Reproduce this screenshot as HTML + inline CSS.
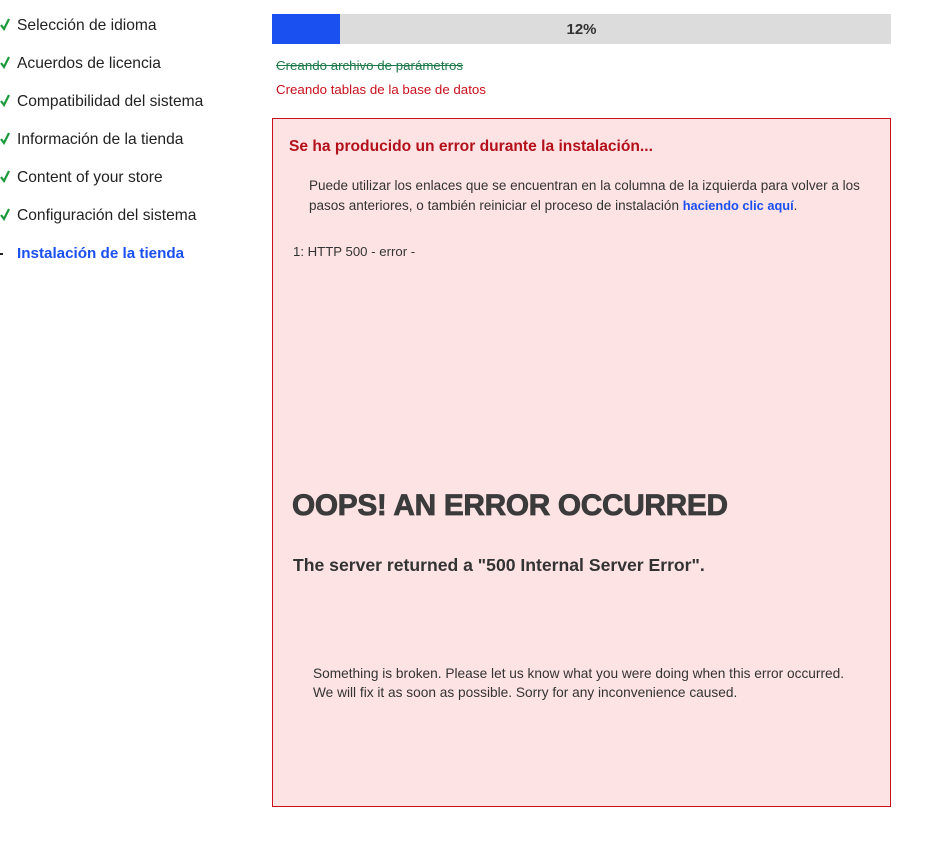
<!DOCTYPE html>
<html><head><meta charset="utf-8"><style>
body{margin:0;width:925px;height:848px;background:#fff;font-family:"Liberation Sans",sans-serif;position:relative;overflow:hidden;color:#222}
.a{position:absolute;white-space:nowrap}
.side{left:17px;font-size:15.6px;color:#222;line-height:20px}
.ck{position:absolute;left:0}
#bar{left:272px;top:14px;width:619px;height:30px;background:#dcdcdc}
#fill{position:absolute;left:0;top:0;width:68px;height:30px;background:#1a4ff0}
#pct{position:absolute;left:0;right:0;top:0;line-height:32px;text-align:center;font-weight:bold;font-size:15px;color:#333}
#box{left:272px;top:118px;width:617px;height:687px;background:#fde3e4;border:1px solid #c8101d}
</style></head><body>
<svg class="ck" style="top:17px" width="10" height="14" viewBox="0 0 10 14"><path d="M1 8 L4 12 L9 2" stroke="#1a9a3a" stroke-width="2.2" fill="none"/></svg>
<svg class="ck" style="top:55px" width="10" height="14" viewBox="0 0 10 14"><path d="M1 8 L4 12 L9 2" stroke="#1a9a3a" stroke-width="2.2" fill="none"/></svg>
<svg class="ck" style="top:93px" width="10" height="14" viewBox="0 0 10 14"><path d="M1 8 L4 12 L9 2" stroke="#1a9a3a" stroke-width="2.2" fill="none"/></svg>
<svg class="ck" style="top:131px" width="10" height="14" viewBox="0 0 10 14"><path d="M1 8 L4 12 L9 2" stroke="#1a9a3a" stroke-width="2.2" fill="none"/></svg>
<svg class="ck" style="top:169px" width="10" height="14" viewBox="0 0 10 14"><path d="M1 8 L4 12 L9 2" stroke="#1a9a3a" stroke-width="2.2" fill="none"/></svg>
<svg class="ck" style="top:207px" width="10" height="14" viewBox="0 0 10 14"><path d="M1 8 L4 12 L9 2" stroke="#1a9a3a" stroke-width="2.2" fill="none"/></svg>
<div class="a" style="left:0;top:253px;width:3px;height:2px;background:#222"></div>
<div class="a side" style="top:16px">Selección de idioma</div>
<div class="a side" style="top:54px">Acuerdos de licencia</div>
<div class="a side" style="top:92px">Compatibilidad del sistema</div>
<div class="a side" style="top:130px">Información de la tienda</div>
<div class="a side" style="top:168px">Content of your store</div>
<div class="a side" style="top:206px">Configuración del sistema</div>
<div class="a side" style="top:244px;color:#1a4ff0;font-weight:bold;font-size:15.2px">Instalación de la tienda</div>
<div class="a" id="bar"><div id="fill"></div><div id="pct">12%</div></div>
<div class="a" style="left:276px;top:58px;font-size:13.3px;color:#1f7a4a;text-decoration:line-through">Creando archivo de parámetros</div>
<div class="a" style="left:276px;top:82px;font-size:13.3px;color:#c8101d">Creando tablas de la base de datos</div>
<div class="a" id="box"></div>
<div class="a" style="left:289px;top:138px;font-size:15.6px;font-weight:bold;color:#b4101b">Se ha producido un error durante la instalación...</div>
<div class="a" style="left:309px;top:176px;font-size:13.5px;line-height:20px;color:#333">Puede utilizar los enlaces que se encuentran en la columna de la izquierda para volver a los<br>pasos anteriores, o también reiniciar el proceso de instalación <b style="color:#1a4ff0;font-size:12.8px">haciendo clic aquí</b>.</div>
<div class="a" style="left:293px;top:244px;font-size:13.2px;color:#333">1: HTTP 500 - error -</div>
<div class="a" style="left:292px;top:489px;font-size:29.8px;font-weight:900;color:#3b3b3b;letter-spacing:-0.3px;-webkit-text-stroke:0.8px #3b3b3b">OOPS! AN ERROR OCCURRED</div>
<div class="a" style="left:293px;top:555px;font-size:17.6px;font-weight:bold;color:#333">The server returned a "500 Internal Server Error".</div>
<div class="a" style="left:313px;top:664px;font-size:13.7px;line-height:19px;color:#333">Something is broken. Please let us know what you were doing when this error occurred.<br>We will fix it as soon as possible. Sorry for any inconvenience caused.</div>
</body></html>
